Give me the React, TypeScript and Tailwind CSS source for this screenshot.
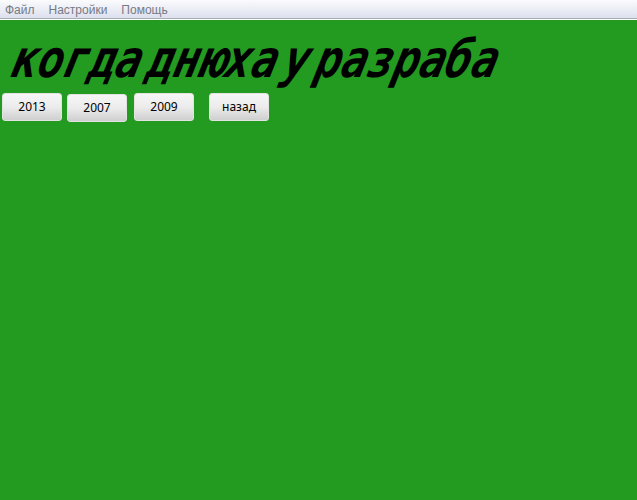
const menuItems = ["Файл", "Настройки", "Помощь"];

function PageButton({ label, className = "" }: { label: string; className?: string }) {
  return (
    <button
      className={`w-[60px] h-[28px] rounded-[3px] border border-[#e2e2e2] bg-gradient-to-b from-[#f6f6f6] via-[#ececec] to-[#cfcfcf] font-['Noto_Sans',sans-serif] text-[12px] text-black ${className}`}
    >
      {label}
    </button>
  );
}

export default function App() {
  return (
    <div className="w-[637px] h-[500px] overflow-hidden bg-[#239a20] font-['Liberation_Sans',sans-serif]">
      {/* Меню */}
      <div className="border-b border-b-white">
        <div className="h-[19px] flex items-start gap-[14px] pl-[5px] pt-[3px] bg-gradient-to-b from-[#fbfbfd] to-[#dde0ee] border-b border-b-[#a9adb6] text-[12px] leading-[15px] text-[#777a84]">
          {menuItems.map((item) => (
            <span key={item}>{item}</span>
          ))}
        </div>
      </div>

      {/* Заголовок */}
      <h1 className="mt-[9px] ml-[6px] h-[64px] whitespace-nowrap origin-[0_61px] [transform:scaleX(0.83)_skewX(-16deg)] font-['DejaVu_Sans_Mono',monospace] font-bold italic text-[52px] leading-[61px] [word-spacing:-24px] text-black">
        когда днюха у разраба
      </h1>

      {/* Кнопки */}
      <div className="flex items-start ml-[2px]">
        <PageButton label="2013" />
        <PageButton label="2007" className="ml-[5px] mt-[1px]" />
        <PageButton label="2009" className="ml-[7px]" />
        <PageButton label="назад" className="ml-[15px]" />
      </div>
    </div>
  );
}
